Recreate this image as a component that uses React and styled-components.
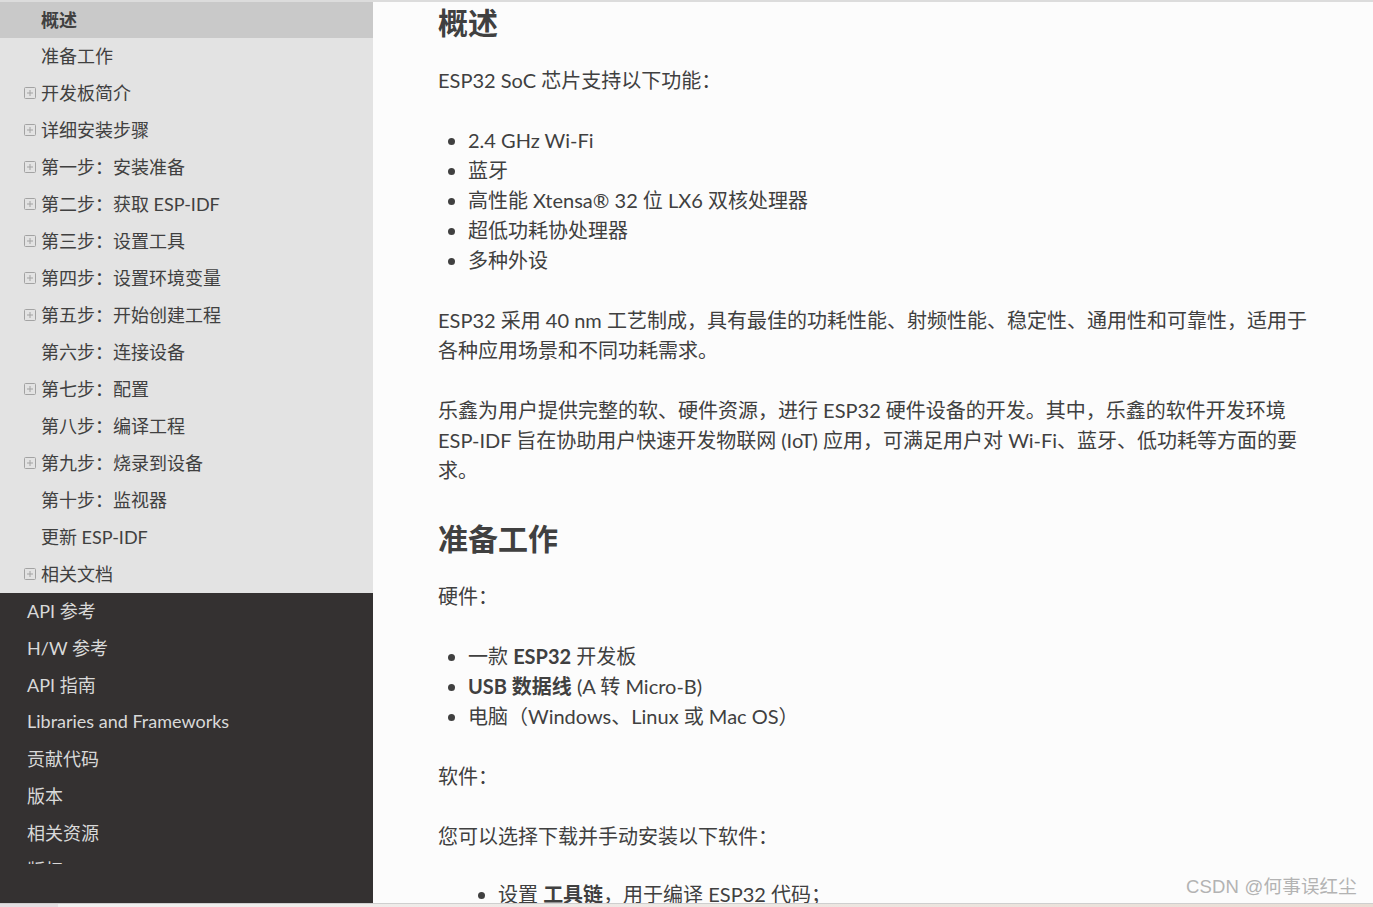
import React from "react";
import styled, { createGlobalStyle } from "styled-components";

const GlobalStyle = createGlobalStyle`
  html, body {
    margin: 0;
    padding: 0;
    overflow: hidden;
    background: #fcfcfc;
  }
  * { box-sizing: border-box; }
`;

const FONT = `Lato, "Noto Sans CJK SC", "Noto Sans", sans-serif`;

const Page = styled.div`
  width: 1373px;
  height: 907px;
  display: flex;
  flex-direction: column;
  font-family: ${FONT};
  color: #404040;
  position: relative;
  overflow: hidden;
`;

const Frame = styled.div`
  flex: 1;
  min-height: 0;
  display: flex;
  border-top: 2px solid #dcdcdc;
`;

const Sidebar = styled.nav`
  width: 373px;
  flex-shrink: 0;
  background: #343131;
  display: flex;
  flex-direction: column;
`;

const Menu = styled.div`
  height: 862px;
  overflow: hidden;
`;

const Section = styled.ul`
  list-style: none;
  margin: 0;
  padding: 0;
  background: ${(p) => (p.$dark ? "#343131" : "#e3e3e3")};
`;

const Item = styled.li`
  height: ${(p) => (p.$current ? "36px" : "37px")};
  display: flex;
  align-items: center;
  padding-left: ${(p) => (p.$dark ? "27px" : "24px")};
  padding-bottom: 3px;
  font-size: 18px;
  white-space: nowrap;
  background: ${(p) => (p.$current ? "#c9c9c9" : "transparent")};
  color: ${(p) => (p.$dark ? "#d9d9d9" : "#404040")};
  font-weight: ${(p) => (p.$current ? 700 : 400)};
`;

const Toggle = styled.span`
  width: 17px;
  flex-shrink: 0;
  display: flex;
  align-items: center;
  padding-top: 2px;
`;

const PlusBox = () => (
  <svg width="12" height="12" viewBox="0 0 12 12">
    <rect x="0.5" y="0.5" width="11" height="11" rx="1" fill="none" stroke="#a3a3a3" />
    <path d="M3 6h6M6 3v6" stroke="#a3a3a3" strokeWidth="1" />
  </svg>
);

const Main = styled.main`
  flex: 1;
  min-width: 0;
  background: #fcfcfc;
  overflow: hidden;
  padding: 2px 0 0 65px;
`;

const Article = styled.article`
  width: 874px;
  font-size: 20px;
  line-height: 30px;
`;

const Heading = styled.h2`
  font-size: 30px;
  line-height: 36px;
  font-weight: 700;
  margin: 35px 0 25px;
  &:first-child { margin-top: 0; }
`;

const Para = styled.p`
  margin: 0 0 30px;
`;

const List = styled.ul`
  margin: ${(p) => (p.$nested ? "-2px" : "0")} 0 30px;
  padding-left: ${(p) => (p.$nested ? "60px" : "30px")};
  list-style: disc;
`;

const Strong = styled.strong`
  font-weight: 700;
`;

const Watermark = styled.div`
  position: absolute;
  right: 16px;
  bottom: 9px;
  font-family: "Liberation Sans", "Noto Sans CJK SC", sans-serif;
  font-size: 18.5px;
  color: #b3b3b3;
  letter-spacing: 0.2px;
`;

const BottomBar = styled.div`
  height: 4px;
  flex-shrink: 0;
  display: flex;
  border-top: 1px solid #cfcfcf;
  background: linear-gradient(90deg, #f1f1f1 0%, #ece4de 70%, #e9ddd4 100%);
`;

const BarThumb = styled.div`
  width: 58px;
  background: #e4dfe2;
`;

const lightItems = [
  { label: "概述", current: true },
  { label: "准备工作" },
  { label: "开发板简介", toggle: true },
  { label: "详细安装步骤", toggle: true },
  { label: "第一步：安装准备", toggle: true },
  { label: "第二步：获取 ESP-IDF", toggle: true },
  { label: "第三步：设置工具", toggle: true },
  { label: "第四步：设置环境变量", toggle: true },
  { label: "第五步：开始创建工程", toggle: true },
  { label: "第六步：连接设备" },
  { label: "第七步：配置", toggle: true },
  { label: "第八步：编译工程" },
  { label: "第九步：烧录到设备", toggle: true },
  { label: "第十步：监视器" },
  { label: "更新 ESP-IDF" },
  { label: "相关文档", toggle: true },
];

const darkItems = [
  "API 参考",
  "H/W 参考",
  "API 指南",
  "Libraries and Frameworks",
  "贡献代码",
  "版本",
  "相关资源",
  "版权",
];

export default function App() {
  return (
    <Page>
      <GlobalStyle />
      <Frame>
        <Sidebar>
          <Menu>
            <Section>
              {lightItems.map((it) => (
                <Item key={it.label} $current={it.current}>
                  <Toggle>{it.toggle ? <PlusBox /> : null}</Toggle>
                  {it.label}
                </Item>
              ))}
            </Section>
            <Section $dark>
              {darkItems.map((label) => (
                <Item key={label} $dark>
                  {label}
                </Item>
              ))}
            </Section>
          </Menu>
        </Sidebar>
        <Main>
          <Article>
            <Heading>概述</Heading>
            <Para>ESP32 SoC 芯片支持以下功能：</Para>
            <List>
              <li>2.4 GHz Wi-Fi</li>
              <li>蓝牙</li>
              <li>高性能 Xtensa® 32 位 LX6 双核处理器</li>
              <li>超低功耗协处理器</li>
              <li>多种外设</li>
            </List>
            <Para>
              ESP32 采用 40 nm 工艺制成，具有最佳的功耗性能、射频性能、稳定性、通用性和可靠性，适用于各种应用场景和不同功耗需求。
            </Para>
            <Para>
              乐鑫为用户提供完整的软、硬件资源，进行 ESP32 硬件设备的开发。其中，乐鑫的软件开发环境 ESP-IDF 旨在协助用户快速开发物联网 (IoT) 应用，可满足用户对 Wi-Fi、蓝牙、低功耗等方面的要求。
            </Para>
            <Heading>准备工作</Heading>
            <Para>硬件：</Para>
            <List>
              <li>
                一款 <Strong>ESP32</Strong> 开发板
              </li>
              <li>
                <Strong>USB 数据线</Strong> (A 转 Micro-B)
              </li>
              <li>电脑（Windows、Linux 或 Mac OS）</li>
            </List>
            <Para>软件：</Para>
            <Para>您可以选择下载并手动安装以下软件：</Para>
            <List $nested>
              <li>
                设置 <Strong>工具链</Strong>，用于编译 ESP32 代码；
              </li>
            </List>
          </Article>
        </Main>
      </Frame>
      <BottomBar>
        <BarThumb />
      </BottomBar>
      <Watermark>CSDN @何事误红尘</Watermark>
    </Page>
  );
}
